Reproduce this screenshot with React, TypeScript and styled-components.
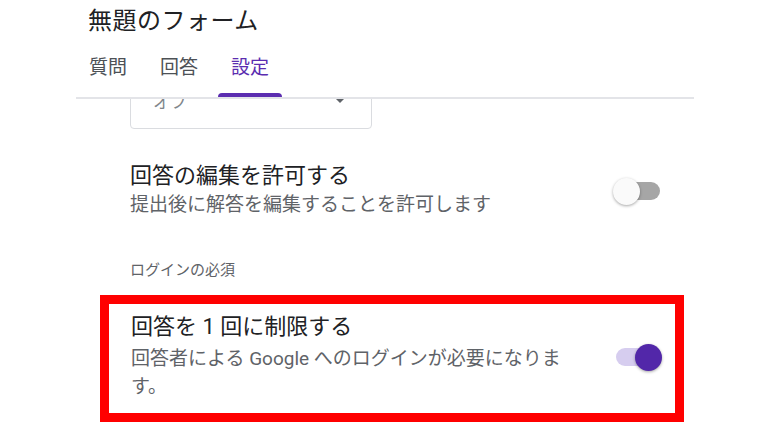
import React from 'react';
import styled, { createGlobalStyle } from 'styled-components';

const GlobalStyle = createGlobalStyle`
  html, body {
    margin: 0;
    padding: 0;
    background: #ffffff;
  }
  body {
    font-family: Roboto, "Noto Sans CJK JP", sans-serif;
    color: #202124;
  }
`;

const Page = styled.div`
  width: 770px;
  height: 433px;
  overflow: hidden;
  padding-left: 76px;
  box-sizing: border-box;
`;

const Column = styled.div`
  width: 618px;
`;

const Header = styled.header`
  border-bottom: 2px solid #e3e4e8;
`;

const Title = styled.h1`
  margin: 0;
  padding: 5px 0 0 12px;
  font-size: 24px;
  letter-spacing: 0.5px;
  font-weight: 400;
  line-height: 32px;
  color: #202124;
`;

const TabBar = styled.nav`
  display: flex;
  gap: 7px;
  margin-top: 18px;
`;

const Tab = styled.div<{ $active?: boolean }>`
  position: relative;
  padding: 0 13px;
  height: 42px;
  font-size: 19px;
  line-height: 26px;
  color: ${p => (p.$active ? '#5b2db0' : '#4d5156')};

  &::after {
    content: '';
    display: ${p => (p.$active ? 'block' : 'none')};
    position: absolute;
    left: 0;
    right: 0;
    bottom: 0;
    height: 4px;
    border-radius: 4px 4px 0 0;
    background: #5b2db0;
  }
`;

const Body = styled.main`
  overflow: hidden;
  height: 340px;
  padding-left: 54px;
`;

const Select = styled.div`
  margin-top: -28px;
  width: 242px;
  height: 58px;
  box-sizing: border-box;
  border: 1px solid #dadce0;
  border-radius: 4px;
  display: flex;
  align-items: center;
  justify-content: space-between;
  padding: 0 26px 0 22px;
  font-size: 17px;
  color: #80868b;
`;

const Caret = styled.span`
  width: 0;
  height: 0;
  border-left: 5px solid transparent;
  border-right: 5px solid transparent;
  border-top: 5px solid #5f6368;
`;

const Setting = styled.section<{ $boxed?: boolean }>`
  display: flex;
  align-items: center;
  justify-content: space-between;
  box-sizing: border-box;
  ${p =>
    p.$boxed
      ? `
    width: 584px;
    margin-left: -30px;
    border: 9px solid #ff0000;
    padding: 9px 13px 12px 22px;
  `
      : `
    width: 533px;
    margin-top: 33px;
  `}
`;

const SettingText = styled.div`
  width: 440px;
`;

const SettingTitle = styled.div`
  font-size: 22px;
  line-height: 28px;
  color: #202124;
`;

const SettingDesc = styled.div<{ $spaced?: boolean }>`
  margin-top: ${p => (p.$spaced ? '4px' : '1px')};
  font-size: 19px;
  line-height: 28px;
  color: #5f6368;
`;

const SectionLabel = styled.div`
  margin: 41px 0 15px;
  font-size: 15px;
  line-height: 20px;
  color: #5f6368;
`;

const Switch = styled.div<{ $on?: boolean }>`
  position: relative;
  width: 50px;
  height: 28px;
  flex-shrink: 0;

  &::before {
    content: '';
    position: absolute;
    left: 4px;
    right: 3px;
    top: 5px;
    height: 18px;
    border-radius: 9px;
    background: ${p => (p.$on ? '#d6cdef' : '#a6a6a6')};
  }

  &::after {
    content: '';
    position: absolute;
    top: 1px;
    left: ${p => (p.$on ? '23px' : '0')};
    width: 27px;
    height: 27px;
    border-radius: 50%;
    background: ${p => (p.$on ? '#5227a9' : '#fafafa')};
    box-shadow: 0 1px 3px rgba(0, 0, 0, 0.35);
  }
`;

export default function App() {
  return (
    <>
      <GlobalStyle />
      <Page>
        <Column>
          <Header>
            <Title>無題のフォーム</Title>
            <TabBar>
              <Tab>質問</Tab>
              <Tab>回答</Tab>
              <Tab $active>設定</Tab>
            </TabBar>
          </Header>
          <Body>
            <Select>
              <span>オフ</span>
              <Caret />
            </Select>

            <Setting>
              <SettingText>
                <SettingTitle>回答の編集を許可する</SettingTitle>
                <SettingDesc>提出後に解答を編集することを許可します</SettingDesc>
              </SettingText>
              <Switch />
            </Setting>

            <SectionLabel>ログインの必須</SectionLabel>

            <Setting $boxed>
              <SettingText>
                <SettingTitle>回答を 1 回に制限する</SettingTitle>
                <SettingDesc $spaced>回答者による Google へのログインが必要になります。</SettingDesc>
              </SettingText>
              <Switch $on />
            </Setting>
          </Body>
        </Column>
      </Page>
    </>
  );
}
